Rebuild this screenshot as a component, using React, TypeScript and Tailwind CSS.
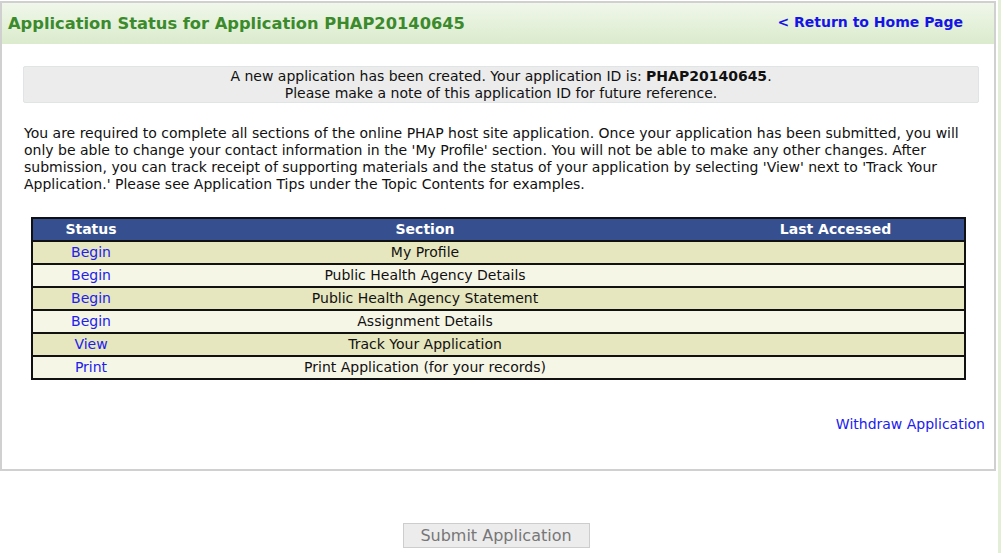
import React from "react";

const rows = [
  { status: "Begin", section: "My Profile" },
  { status: "Begin", section: "Public Health Agency Details" },
  { status: "Begin", section: "Public Health Agency Statement" },
  { status: "Begin", section: "Assignment Details" },
  { status: "View", section: "Track Your Application" },
  { status: "Print", section: "Print Application (for your records)" },
];

export default function App() {
  return (
    <div className="flex min-h-[553px] bg-white font-['DejaVu_Sans',Verdana,sans-serif] text-[#111]">
      <div className="w-[996px]">
        <div className="mt-[1px] h-[470px] border-2 border-[#d0d0d0]">
          <div className="flex h-[41px] items-center justify-between bg-gradient-to-b from-[#f0f7eb] to-[#dbebcc] pl-[6px] pr-[31px] pt-[1px]">
            <h1 className="text-[16.3px] font-bold text-[#3b8a2c]">
              Application Status for Application PHAP20140645
            </h1>
            <a href="#" className="mb-[3px] text-[14px] font-bold text-[#1414e8]">
              &lt; Return to Home Page
            </a>
          </div>

          <div className="ml-[21px] mr-[15px] mt-[22px] flex h-[37px] flex-col items-center justify-center rounded-[2px] border border-[#dfe4e4] bg-[#ececec] text-[14px] leading-[17px]">
            <p>
              A new application has been created. Your application ID is:{" "}
              <b>PHAP20140645</b>.
            </p>
            <p>Please make a note of this application ID for future reference.</p>
          </div>

          <p className="ml-[22px] mr-[8px] mt-[22px] text-[14px] leading-[17px]">
            You are required to complete all sections of the online PHAP host site
            application. Once your application has been submitted, you will only be
            able to change your contact information in the 'My Profile' section. You
            will not be able to make any other changes. After submission, you can
            track receipt of supporting materials and the status of your application
            by selecting 'View' next to 'Track Your Application.' Please see
            Application Tips under the Topic Contents for examples.
          </p>

          <table className="ml-[29px] mt-[24px] w-[935px] border-collapse border-2 border-[#111] text-[14px]">
            <thead>
              <tr className="h-[22px] bg-[#36508f] text-white">
                <th className="w-[117px] font-bold">Status</th>
                <th className="w-[552px] font-bold">Section</th>
                <th className="pl-[6px] font-bold">Last Accessed</th>
              </tr>
            </thead>
            <tbody>
              {rows.map((row, i) => (
                <tr
                  key={row.section}
                  className={`h-[23px] border-t-2 border-[#111] ${
                    i % 2 === 0 ? "bg-[#e6e6bf]" : "bg-[#f6f6e7]"
                  }`}
                >
                  <td className="text-center">
                    <a href="#" className="text-[#2020ee]">
                      {row.status}
                    </a>
                  </td>
                  <td className="text-center">{row.section}</td>
                  <td />
                </tr>
              ))}
            </tbody>
          </table>

          <div className="mr-[9px] mt-[34px] text-right text-[14px]">
            <a href="#" className="text-[#2020ee]">
              Withdraw Application
            </a>
          </div>
        </div>

        <div className="mt-[52px] flex justify-center pr-[4px]">
          <button
            type="button"
            className="h-[25px] w-[187px] border border-[#cdcdcd] bg-[#ececec] text-[16px] text-[#777]"
          >
            Submit Application
          </button>
        </div>
      </div>
      <div className="ml-[2px] w-[3px] bg-[#e2eed8]" />
    </div>
  );
}
